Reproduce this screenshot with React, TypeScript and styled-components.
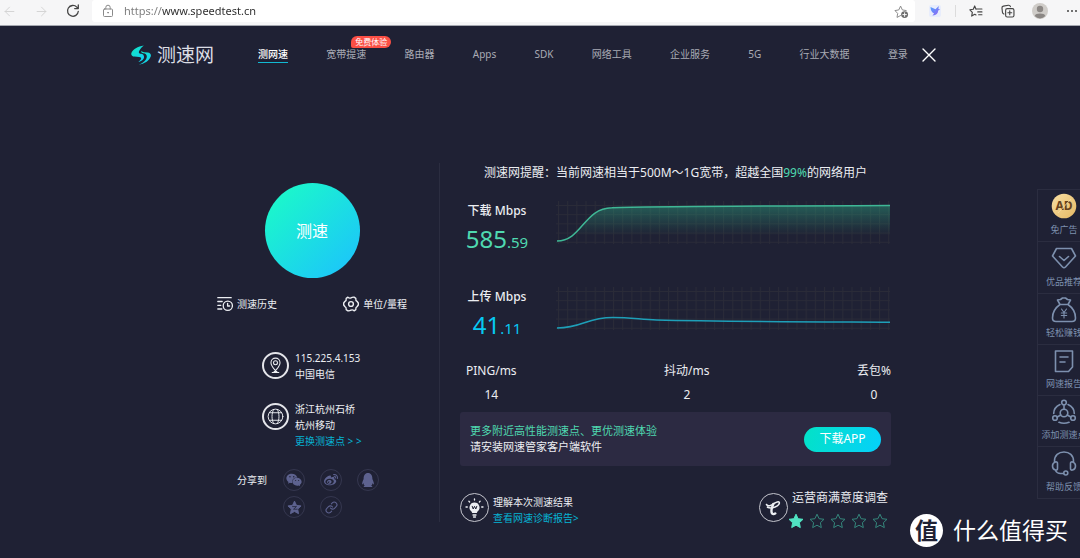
import React, { useId } from 'react';
import styled, { createGlobalStyle, css } from 'styled-components';
import { ArrowLeft, ArrowRight, Link as LinkIcon } from 'lucide-react';
import { FaWeixin, FaWeibo, FaQq } from 'react-icons/fa';

const color = {
  page: '#1f2134',
  panel: '#2c2a42',
  line: '#2b2d40',
  text: '#eceef2',
  muted: '#a9abb5',
  green: '#4fd9b0',
  cyan: '#06b4d4',
  rail: '#7d90ae',
  share: '#5d628f',
};

const GlobalStyle = createGlobalStyle`
  * { box-sizing: border-box; }
  body {
    margin: 0;
    background: ${color.page};
    color: ${color.text};
    font-family: "Noto Sans", "Noto Sans CJK SC", sans-serif;
    font-size: 10px;
    line-height: 16px;
    overflow-x: hidden;
  }
  button, input { font: inherit; color: inherit; }
  button { border: 0; padding: 0; background: none; cursor: pointer; }
  a { color: inherit; text-decoration: none; }
  h2, p, dl, dd { margin: 0; padding: 0; font-weight: 400; }
  svg { display: block; flex: none; }
`;

const Page = styled.div`
  position: relative;
  min-height: 100vh;
  overflow: hidden;
`;

/* Browser bar */
const BrowserBar = styled.div`
  display: flex;
  align-items: center;
  height: 26px;
  padding: 0 0 3px 1px;
  background: #f6f6f7;
  border-bottom: 1px solid #a5a8b0;
  color: #444;
`;
const BarGroup = styled.div<{ $gap: number }>`
  display: flex;
  align-items: center;
  gap: ${(p) => p.$gap}px;
`;
const BarButton = styled.button<{ $faded?: boolean }>`
  display: flex;
  align-items: center;
  justify-content: center;
  width: 16px;
  height: 16px;
  color: ${(p) => (p.$faded ? '#d2d2d2' : '#444')};
`;
const AddressBox = styled.label`
  display: flex;
  align-items: center;
  flex: 1;
  height: 22px;
  margin: 0 12px 0 11px;
  padding: 0 6px 0 10px;
  border-radius: 3px;
  background: #fff;
`;
/* The scheme is drawn paler than the host name */
const AddressField = styled.input`
  flex: 1;
  min-width: 0;
  margin-left: 10px;
  padding: 0;
  border: 0;
  outline: 0;
  background: linear-gradient(90deg, #7a7a7a 38px, #2b2b2b 38px);
  background-clip: text;
  -webkit-background-clip: text;
  color: transparent;
  caret-color: #2b2b2b;
  font-size: 11px;
`;
const BarSeparator = styled.span`
  width: 1px;
  height: 12px;
  margin-right: 12px;
  background: #dcdcdc;
`;

/* Site header */
const Header = styled.header`
  display: flex;
  align-items: center;
  height: 57px;
  padding: 0 143px 0 131px;
`;
const Logo = styled.a`
  display: flex;
  align-items: center;
  gap: 6px;
  font-size: 19px;
  line-height: 24px;
  color: #dcdee4;
  white-space: nowrap;
`;
const Nav = styled.nav`
  display: flex;
  flex: 1;
  justify-content: space-between;
  margin: 0 13px 0 44px;
`;
const NavLink = styled.a<{ $active?: boolean }>`
  position: relative;
  border-bottom: 1px solid transparent;
  color: ${color.muted};
  white-space: nowrap;
  ${(p) =>
    p.$active &&
    css`
      border-color: #12b9d3;
      color: #fff;
      font-weight: 500;
    `}
`;
const Badge = styled.span`
  position: absolute;
  left: 25px;
  top: -10px;
  padding: 0 4px;
  border-radius: 6px 6px 6px 2px;
  background: #fb4f45;
  color: #fff;
  font-size: 8px;
  line-height: 12px;
`;

/* Main area */
const Main = styled.main`
  display: flex;
  align-items: flex-start;
  width: 65%;
  min-width: 700px;
  margin: 80px auto 24px;
`;
const Side = styled.section`
  display: flex;
  flex-direction: column;
  align-items: center;
  flex: none;
  width: 251px;
  padding: 20px 4px 4px 0;
  border-right: 1px solid ${color.line};
`;
const StartButton = styled.button`
  width: 95px;
  height: 95px;
  border-radius: 50%;
  background: linear-gradient(135deg, #1bffc4, #1cc0ff);
  color: #fff;
  font-size: 16px;
`;
const Actions = styled.div`
  display: flex;
  justify-content: space-between;
  width: 190px;
  margin-top: 18px;
`;
const ActionButton = styled.button`
  display: flex;
  align-items: center;
  gap: 4px;
  white-space: nowrap;
`;
const InfoList = styled.div`
  display: flex;
  flex-direction: column;
  gap: 19px;
  width: 100px;
  margin-top: 38px;
`;
const InfoRow = styled.div`
  display: flex;
  gap: 6px;
  white-space: nowrap;
`;
const RingIcon = styled.span<{ $size: number; $thick?: boolean }>`
  display: flex;
  align-items: center;
  justify-content: center;
  flex: none;
  width: ${(p) => p.$size}px;
  height: ${(p) => p.$size}px;
  margin-top: 2px;
  border: ${(p) => (p.$thick ? '2px solid #e4e5ea' : '1px solid #c4c5cd')};
  border-radius: 50%;
`;
const CyanLink = styled.a`
  display: block;
  color: ${color.cyan};
`;
const Share = styled.div`
  display: flex;
  gap: 16px;
  width: 150px;
  margin-top: 20px;
  line-height: 22px;
  white-space: nowrap;
`;
const ShareGrid = styled.div`
  display: grid;
  grid-template-columns: repeat(3, 22px);
  gap: 5px 15px;
`;
const ShareLink = styled.a`
  display: flex;
  align-items: center;
  justify-content: center;
  height: 22px;
  border: 1px solid #35374f;
  border-radius: 50%;
  color: ${color.share};
`;

const Results = styled.section`
  flex: 1;
  min-width: 0;
  padding: 1px 0 0 20px;
`;
const Notice = styled.p`
  font-size: 12px;
  line-height: 18px;
  text-align: center;
  white-space: nowrap;
`;
const GreenText = styled.span`
  color: ${color.green};
`;
const SpeedRow = styled.div`
  display: flex;
  gap: 22px;
  height: 86px;
`;
const SpeedLabel = styled.div`
  flex: none;
  width: 74px;
  text-align: center;
  white-space: nowrap;
`;
const SpeedTitle = styled.h2`
  font-size: 12px;
  line-height: 20px;
  font-weight: 500;
`;
const SpeedValue = styled.p<{ $color: string }>`
  color: ${(p) => p.$color};
  font-size: 24px;
  line-height: 36px;
`;
const Decimals = styled.span`
  font-size: 15px;
`;
const ChartSvg = styled.svg`
  flex: 1;
  min-width: 0;
  height: 44px;
`;
const SpeedList = styled.div`
  height: 177px;
  padding-top: 19px;
`;
const Stats = styled.dl`
  display: flex;
  justify-content: space-between;
  padding-left: 6px;
  font-size: 12px;
  line-height: 24px;
  text-align: center;
`;
const Promo = styled.div`
  display: flex;
  align-items: center;
  justify-content: space-between;
  height: 54px;
  margin-top: 5px;
  padding: 0 10px;
  border-radius: 3px;
  background: ${color.panel};
  font-size: 11px;
`;
const DownloadButton = styled.button`
  width: 77px;
  height: 25px;
  border-radius: 13px;
  background: linear-gradient(110deg, #03e2c6, #05d0fb);
  color: #fff;
  font-size: 12px;
`;
const Footer = styled.div`
  display: flex;
  justify-content: space-between;
  margin-top: 25px;
  padding-right: 3px;
`;
const FooterItem = styled.div`
  display: flex;
  white-space: nowrap;
`;
const FooterText = styled.div`
  padding: 3px 0 0 4px;
`;
const SurveyTitle = styled.p`
  padding-left: 4px;
  font-size: 12px;
  line-height: 14px;
`;
const Stars = styled.div`
  display: flex;
  gap: 5px;
  margin-top: 8px;
`;

/* Right rail and brand mark */
const Rail = styled.aside`
  position: absolute;
  top: 189px;
  right: -11px;
  width: 54px;
  border: 1px solid ${color.line};
`;
const RailItem = styled.a`
  display: flex;
  flex-direction: column;
  align-items: center;
  justify-content: space-between;
  height: 52px;
  padding: 3px 0 4px;
  border-bottom: 1px solid ${color.line};
  color: ${color.rail};
  font-size: 9px;
  line-height: 14px;
  white-space: nowrap;
  &:nth-child(n + 3) { height: 51px; }
  &:last-child { border-bottom: 0; }
`;
const Mark = styled.div`
  position: absolute;
  right: 12px;
  top: 514px;
  display: flex;
  align-items: center;
  gap: 10px;
  color: #fff;
  font-size: 23px;
  line-height: 33px;
`;
const MarkDisc = styled.span`
  width: 33px;
  height: 33px;
  border-radius: 50%;
  background: #fff;
  color: ${color.page};
  font-weight: 700;
  text-align: center;
`;

const stroke = { fill: 'none', stroke: 'currentColor', strokeLinecap: 'round', strokeLinejoin: 'round' } as const;
const STAR = 'M8 1.2l2.1 4.5 4.9.6-3.6 3.4.9 4.9L8 12.2l-4.3 2.4.9-4.9L1 6.3l4.9-.6z';

const ReloadIcon = () => (
  <svg width="14" height="14" viewBox="0 0 14 14" {...stroke} strokeWidth="1.3">
    <path d="M12.3 7.3A5.4 5.4 0 1 1 10.8 3.1L12 4.4M12.3 1v3.6H8.7" />
  </svg>
);
const LockIcon = () => (
  <svg width="12" height="14" viewBox="0 0 12 14" {...stroke} stroke="#8a8a8a" strokeWidth="1">
    <rect x="1.5" y="5" width="9" height="7.5" rx="1" />
    <path d="M3.8 5V3.4a2.2 2.2 0 0 1 4.4 0V5" />
    <circle cx="6" cy="8.7" r=".4" fill="#8a8a8a" />
  </svg>
);
const AddFavoriteIcon = () => (
  <svg width="15" height="15" viewBox="0 0 16 16" {...stroke} stroke="#858585" strokeWidth="1">
    <path d="M7 12.3l-3.8 2 .7-4.3L1 7l4.1-.7L7 2.2l1.9 4.1L13 7" />
    <circle cx="11.3" cy="11.3" r="3.7" fill="#6c6c6c" stroke="none" />
    <path d="M9.4 11.3h3.8M11.3 9.4v3.8" stroke="#fff" />
  </svg>
);
const BirdIcon = () => (
  <svg width="14" height="14" viewBox="0 0 14 14">
    <defs>
      <linearGradient id="bird" x1="0" x2="1" y2="1">
        <stop stopColor="#4da4ff" />
        <stop offset="1" stopColor="#9a62f2" />
      </linearGradient>
    </defs>
    <rect x="1" y="1" width="12" height="12" rx="2" fill="#e8edfc" />
    <path d="M2.5 3l5 2.3L10.8 2l-.4 3 1.8.4-2 1.2c-.1 3-2 5-5.800 4.800l1.700-1.800C3.700 8.600 2.600 6 2.500 3z" fill="url(#bird)" />
  </svg>
);
const FavoritesIcon = () => (
  <svg width="14" height="14" viewBox="0 0 16 16" {...stroke} strokeWidth="1.3">
    <path d="M8 5.900L6.500 2.200 4.900 6 1 6.600l2.800 3-.7 4.200 3.500-2 1.400.8M8.300 5.700h6.500M10 9h4.800M11 12.300h3.800" />
  </svg>
);
const CollectionsIcon = () => (
  <svg width="14" height="14" viewBox="0 0 16 16" {...stroke} strokeWidth="1.300">
    <rect x="5.300" y="5.300" width="9.500" height="9.500" rx="1.800" />
    <path d="M3.300 11.500C2 11 1.800 10.300 1.600 9.200L1.100 4.600c-.1-1.300.4-2 1.600-2.200l5.800-1c1.300-.1 2 .5 2.300 1.700M10 7.800v4.500M7.800 10h4.500" />
  </svg>
);
const AvatarIcon = () => (
  <svg width="16" height="16" viewBox="0 0 16 16">
    <circle cx="8" cy="8" r="8" fill="#cfccc8" />
    <circle cx="8" cy="6" r="3.200" fill="#8b8784" />
    <path d="M2.700 13c.6-2 2.400-2.600 5.300-2.600s4.700.6 5.300 2.600A8 8 0 0 1 8 15.500 8 8 0 0 1 2.700 13z" fill="#8b8784" />
  </svg>
);
const MoreIcon = () => (
  <svg width="12" height="4" viewBox="0 0 12 4" fill="#444">
    <circle cx="2" cy="2" r="1" />
    <circle cx="6" cy="2" r="1" />
    <circle cx="10" cy="2" r="1" />
  </svg>
);
const CloseIcon = () => (
  <svg width="14" height="14" viewBox="0 0 14 14" {...stroke} stroke="#fff" strokeWidth="1.400">
    <path d="M1 1l12 12M13 1L1 13" />
  </svg>
);
const LogoIcon = () => (
  <svg width="20" height="20" viewBox="0 0 20 20">
    <defs>
      <linearGradient id="logo" x1="0" x2="1" y2="1">
        <stop stopColor="#12e6bd" />
        <stop offset="1" stopColor="#12cdfa" />
      </linearGradient>
    </defs>
    <path
      d="M12.800.5C7 1.400 1.600 4.400.4 8c-.6 2 .8 3.400 3 3.600l4.800.3c2.200.2 2.500 1.500 1.200 3l-2 2.200c3-.8 5.800-2.900 5.600-5.400-.1-1.900-1.300-2.800-3-2.900C8 8.700 7.300 7.600 8.300 5.800 9.200 4 10.800 2 12.800.5z"
      fill="url(#logo)"
    />
    <path
      d="M10.500 5.800c-.6 1.400.2 2.200 1.800 2.400 2.400.3 3.700 1.600 3.500 3.800-.3 3-3.500 5.800-8 7.800 5.500-.8 10.500-4 11.900-8.200.7-2.200-.6-3.900-2.900-4.100l-3.700-.3c-1.300-.1-2.200-.5-2.600-1.400z"
      fill="url(#logo)"
    />
  </svg>
);
const HistoryIcon = () => (
  <svg width="16" height="16" viewBox="0 0 16 16" {...stroke} strokeWidth="1.300">
    <path d="M.8 1.700h13.400M.8 5.500h4.400M.8 9.300h3M.8 13h4" />
    <circle cx="10.800" cy="9.700" r="4.600" />
    <path d="M10.600 7.300v2.700h2" />
  </svg>
);
const GearIcon = () => (
  <svg width="16" height="16" viewBox="0 0 16 16" {...stroke} strokeWidth="1.400">
    <path d="M4.900 1.200Q6.400 2.700 8 1.800T11.100 1.200L12.800 2.300Q12.500 4.600 14 5.300L15.300 7v2L14 10.700Q12.500 11.400 12.800 13.700L11.100 14.800Q9.600 13.300 8 14.200T4.900 14.800L3.200 13.700Q3.500 11.400 2 10.700L.7 9V7L2 5.300Q3.500 4.600 3.200 2.300z" />
    <circle cx="8" cy="8" r="2.400" />
  </svg>
);
const PinIcon = () => (
  <svg width="17" height="17" viewBox="0 0 18 18" {...stroke} strokeWidth="1.100">
    <path d="M9 14.500C6.500 11.300 4.200 9 4.200 6a4.800 4.800 0 0 1 9.600 0c0 3-2.300 5.300-4.800 8.500zM5.500 16.500h7M7.500 15.500h3" />
    <circle cx="9" cy="6" r="2.100" />
  </svg>
);
const GlobeIcon = () => (
  <svg width="17" height="17" viewBox="0 0 18 18" {...stroke} strokeWidth="1">
    <circle cx="9" cy="9" r="7.800" />
    <path d="M7 1.500c-2.300 4.500-2.300 10.500 0 15M11 1.500c2.300 4.500 2.300 10.500 0 15M2.500 5h13M2.500 13h13" />
  </svg>
);
const BulbIcon = () => (
  <svg width="19" height="20" viewBox="0 0 19 20" {...stroke} strokeWidth="1.300">
    <path d="M9.500 4.500a5 5 0 0 1 3 9l-.7 1.600H7.200l-.7-1.600a5 5 0 0 1 3-9z" fill="currentColor" stroke="none" />
    <path d="M8 17h3M8.500 19h2M9.500 1v1M3.900 3.300l.7.700M15.100 3.300l-.7.700M1 9h1.300M16.700 9H18" />
    <path d="M7.200 8.300l1 2.700 1.300-2.700 1.300 2.700 1-2.700" stroke={color.page} strokeWidth="1" />
  </svg>
);
const TelecomIcon = () => (
  <svg width="18" height="18" viewBox="0 0 18 18" {...stroke}>
    <path d="M2.500 5.500C4 8 7.500 6.500 10 4.500c2-1.500 4.800-2.400 5.300-1 .4 1.500-2 3.500-4.300 4.500-2.500 1-5.500 1.200-7.500.2" strokeWidth="1.600" />
    <path d="M9.300 5C7.800 8.500 7 12 7.800 14c.6 1.500 2.300 1.400 3.500.4" strokeWidth="2.400" />
  </svg>
);
const QzoneIcon = () => (
  <svg width="15" height="15" viewBox="0 0 16 16">
    <path d={STAR} fill="currentColor" stroke="currentColor" strokeWidth="1" strokeLinejoin="round" />
    <path d="M5.500 7h4.600L7 9.800h4.200" fill="none" stroke={color.page} strokeWidth=".8" />
  </svg>
);
const StarIcon = ({ filled }: { filled?: boolean }) => (
  <svg width="16" height="16" viewBox="0 0 16 16" fill={filled ? '#50e3c2' : 'none'} stroke={filled ? '#50e3c2' : '#35877c'} strokeWidth="1">
    <path d={STAR} />
  </svg>
);

const RailGlyph = ({ children }: { children: React.ReactNode }) => (
  <svg width="26" height="26" viewBox="0 0 26 26" {...stroke} strokeWidth="1.600">
    {children}
  </svg>
);

const AdGlyph = () => (
  <svg width="26" height="26" viewBox="0 0 26 26">
    <defs>
      <linearGradient id="gold" x1="0" x2="1" y2="1">
        <stop stopColor="#f8dfa3" />
        <stop offset="1" stopColor="#e5b864" />
      </linearGradient>
    </defs>
    <circle cx="13" cy="13" r="12.300" fill="url(#gold)" />
    <text x="13" y="17" textAnchor="middle" fontSize="12" fontWeight="700" fill="#67431d">AD</text>
    <path d="M7 20L20 6" stroke="#f8dfa3" strokeWidth=".8" />
  </svg>
);

const railItems = [
  { label: '免广告', glyph: <AdGlyph /> },
  {
    label: '优品推荐',
    glyph: (
      <RailGlyph>
        <path d="M5.500 3.500h15L24.500 11 14.500 22q-1.500 1.300-3 0L1.500 11zM8.500 11.500l4.500 4 4.500-4" />
      </RailGlyph>
    ),
  },
  {
    label: '轻松赚钱',
    glyph: (
      <RailGlyph>
        <path d="M9 7.500L6.500 3l3-.5L11.500 1h3l2 1.500 3 .5L17 7.500zM9 7.500C4 11 1.500 16 1.500 21q0 3.500 3.500 3.500h16q3.500 0 3.500-3.500c0-5-2.500-10-7.500-13.500" />
        <path d="M10.500 12l2.500 3.500 2.500-3.500M13 15.500V21M10.300 16h5.400M10.300 18.500h5.400" strokeWidth="1.100" />
      </RailGlyph>
    ),
  },
  {
    label: '网速报告',
    glyph: (
      <RailGlyph>
        <path d="M4.500 3h17v16l-4 4.500h-13zM9 9h8M9 14h5" />
      </RailGlyph>
    ),
  },
  {
    label: '添加测速点',
    glyph: (
      <RailGlyph>
        <circle cx="13" cy="3.500" r="2.300" />
        <circle cx="4" cy="19" r="2.300" />
        <circle cx="22" cy="19" r="2.300" />
        <circle cx="13" cy="14" r="3.800" />
        <path d="M13 6v4M9.800 16l-3.600 2M16.200 16l3.600 2M9 5.500C5 7.300 2.700 10.500 2.700 14.500M17 5.500c4 1.800 6.300 5 6.300 9M8 23.300q5 2 10 0" />
      </RailGlyph>
    ),
  },
  {
    label: '帮助反馈',
    glyph: (
      <RailGlyph>
        <path d="M3.500 12.500V11C3.500 5.500 7.500 2 13 2s9.500 3.500 9.500 9v1.500M4.500 12c1.300-.3 2 .3 2 1.500v5c0 1.300-.7 1.800-2 1.500-2-.4-3-1.700-3-4s1-3.500 3-4zM21.500 12c-1.300-.3-2 .3-2 1.500v5c0 1.300.7 1.800 2 1.500 2-.4 3-1.700 3-4s-1-3.500-3-4zM4.500 20.500q1.500 3 5 3h3" />
        <circle cx="14.800" cy="23" r="2" />
      </RailGlyph>
    ),
  },
];

const navItems = ['测网速', '宽带提速', '路由器', 'Apps', 'SDK', '网络工具', '企业服务', '5G', '行业大数据', '登录'];

const shareItems = [
  { name: '微信', icon: <FaWeixin size={16} /> },
  { name: '微博', icon: <FaWeibo size={14} /> },
  { name: 'QQ', icon: <FaQq size={14} /> },
  { name: 'QQ空间', icon: <QzoneIcon /> },
  { name: '复制链接', icon: <LinkIcon size={13} strokeWidth={2} /> },
];

const stats = [
  ['PING/ms', '14'],
  ['抖动/ms', '2'],
  ['丢包%', '0'],
];

function SpeedChart({ line, tone, filled }: { line: string; tone: string; filled?: boolean }) {
  const id = useId();
  return (
    <ChartSvg viewBox="0 0 336 44" preserveAspectRatio="none" aria-hidden="true">
      <defs>
        <pattern id={`${id}g`} width="9.200" height="9.200" patternUnits="userSpaceOnUse" x="2" y="4">
          <path d="M.5 0V9.200M0 .5H9.200" stroke="#2a2b38" fill="none" />
        </pattern>
        <linearGradient id={`${id}f`} x2="0" y2="1">
          <stop stopColor="#2ca481" stopOpacity=".45" />
          <stop offset=".8" stopColor="#2ca481" stopOpacity="0" />
        </linearGradient>
      </defs>
      <rect width="335" height="43" fill={`url(#${id}g)`} />
      {filled && <path d={`${line} V42 H1z`} fill={`url(#${id}f)`} />}
      <path d={line} fill="none" stroke={tone} strokeWidth="1.500" />
    </ChartSvg>
  );
}

export default function App() {
  return (
    <>
      <GlobalStyle />
      <Page>
        <BrowserBar>
          <BarGroup $gap={16}>
            <BarButton $faded aria-label="后退"><ArrowLeft size={15} strokeWidth={1.5} /></BarButton>
            <BarButton $faded aria-label="前进"><ArrowRight size={15} strokeWidth={1.5} /></BarButton>
            <BarButton aria-label="刷新"><ReloadIcon /></BarButton>
          </BarGroup>
          <AddressBox>
            <LockIcon />
            <AddressField aria-label="地址" defaultValue="https://www.speedtest.cn" />
            <AddFavoriteIcon />
          </AddressBox>
          <BarGroup $gap={12}>
            <BarButton aria-label="扩展"><BirdIcon /></BarButton>
            <BarSeparator />
          </BarGroup>
          <BarGroup $gap={16}>
            <BarButton aria-label="收藏夹"><FavoritesIcon /></BarButton>
            <BarButton aria-label="集锦"><CollectionsIcon /></BarButton>
            <BarButton aria-label="个人资料"><AvatarIcon /></BarButton>
            <BarButton aria-label="更多"><MoreIcon /></BarButton>
          </BarGroup>
        </BrowserBar>

        <Header>
          <Logo href="#"><LogoIcon />测速网</Logo>
          <Nav>
            {navItems.map((item, i) => (
              <NavLink key={item} href="#" $active={i === 0}>
                {item}
                {i === 1 && <Badge>免费体验</Badge>}
              </NavLink>
            ))}
          </Nav>
          <BarButton aria-label="关闭"><CloseIcon /></BarButton>
        </Header>

        <Main>
          <Side>
            <StartButton>测速</StartButton>
            <Actions>
              <ActionButton><HistoryIcon />测速历史</ActionButton>
              <ActionButton><GearIcon />单位/量程</ActionButton>
            </Actions>
            <InfoList>
              <InfoRow>
                <RingIcon $size={27} $thick><PinIcon /></RingIcon>
                <div>
                  <p>115.225.4.153</p>
                  <p>中国电信</p>
                </div>
              </InfoRow>
              <InfoRow>
                <RingIcon $size={27} $thick><GlobeIcon /></RingIcon>
                <div>
                  <p>浙江杭州石桥</p>
                  <p>杭州移动</p>
                  <CyanLink href="#">更换测速点 &gt; &gt;</CyanLink>
                </div>
              </InfoRow>
            </InfoList>
            <Share>
              分享到
              <ShareGrid>
                {shareItems.map((s) => (
                  <ShareLink key={s.name} href="#" aria-label={s.name}>{s.icon}</ShareLink>
                ))}
              </ShareGrid>
            </Share>
          </Side>

          <Results>
            <Notice>
              测速网提醒：当前网速相当于500M～1G宽带，超越全国<GreenText>99%</GreenText>的网络用户
            </Notice>
            <SpeedList>
              <SpeedRow>
                <SpeedLabel>
                  <SpeedTitle>下载 Mbps</SpeedTitle>
                  <SpeedValue $color={color.green}>585<Decimals>.59</Decimals></SpeedValue>
                </SpeedLabel>
                <SpeedChart tone="#3fb796" filled line="M1 40C26 40 28 7 56 6.700 90 5.500 200 5 335 4.500" />
              </SpeedRow>
              <SpeedRow>
                <SpeedLabel>
                  <SpeedTitle>上传 Mbps</SpeedTitle>
                  <SpeedValue $color="#07c8f2">41<Decimals>.11</Decimals></SpeedValue>
                </SpeedLabel>
                <SpeedChart tone="#1e9fb8" line="M1 41C27 41 30 30.500 57 30.500 75 30.500 85 32.500 101 33 160 34.500 240 34.700 335 35.200" />
              </SpeedRow>
            </SpeedList>
            <Stats>
              {stats.map(([label, value]) => (
                <div key={label}>
                  <dt>{label}</dt>
                  <dd>{value}</dd>
                </div>
              ))}
            </Stats>
            <Promo>
              <div>
                <p><GreenText>更多附近高性能测速点、更优测速体验</GreenText></p>
                <p>请安装网速管家客户端软件</p>
              </div>
              <DownloadButton>下载APP</DownloadButton>
            </Promo>
            <Footer>
              <FooterItem>
                <RingIcon $size={29}><BulbIcon /></RingIcon>
                <FooterText>
                  <p>理解本次测速结果</p>
                  <CyanLink href="#">查看网速诊断报告&gt;</CyanLink>
                </FooterText>
              </FooterItem>
              <FooterItem>
                <RingIcon $size={29}><TelecomIcon /></RingIcon>
                <div>
                  <SurveyTitle>运营商满意度调查</SurveyTitle>
                  <Stars role="group" aria-label="满意度">
                    {[1, 2, 3, 4, 5].map((n) => (
                      <button key={n} aria-label={`${n} 星`}><StarIcon filled={n === 1} /></button>
                    ))}
                  </Stars>
                </div>
              </FooterItem>
            </Footer>
          </Results>
        </Main>

        <Rail>
          {railItems.map((r) => (
            <RailItem key={r.label} href="#">
              {r.glyph}
              {r.label}
            </RailItem>
          ))}
        </Rail>

        <Mark>
          <MarkDisc>值</MarkDisc>
          什么值得买
        </Mark>
      </Page>
    </>
  );
}
